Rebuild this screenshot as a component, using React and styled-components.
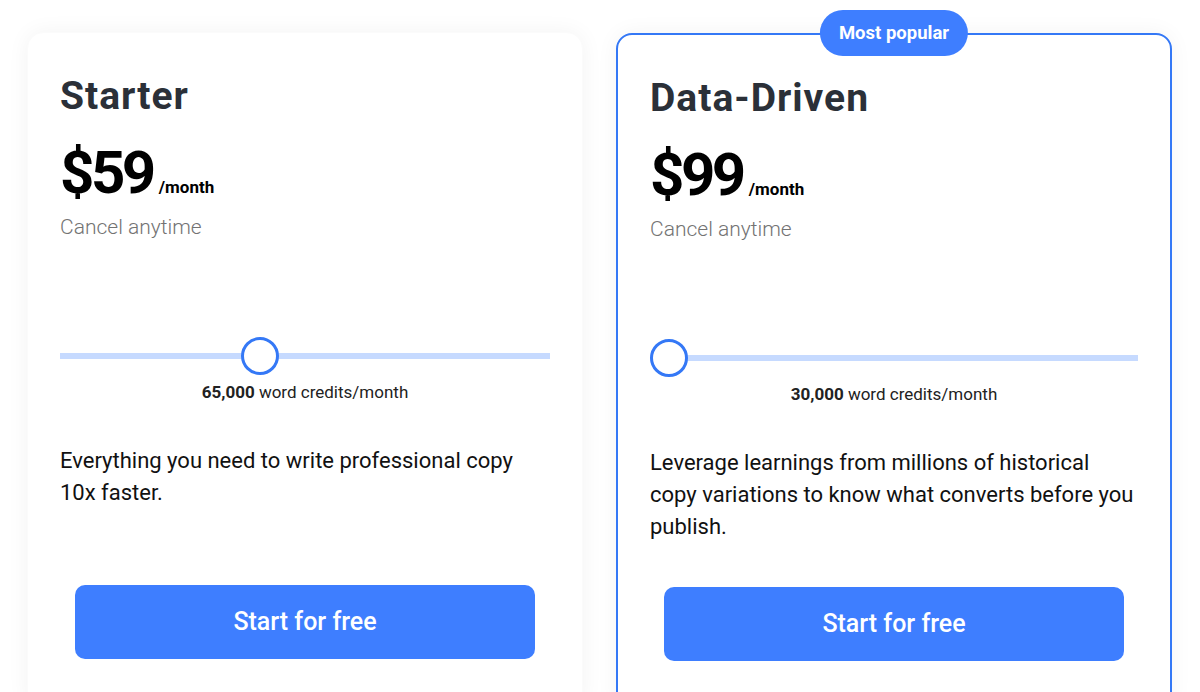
import React from "react";
import styled, { createGlobalStyle } from "styled-components";

const Global = createGlobalStyle`
  html, body { margin: 0; padding: 0; background: #ffffff; overflow: hidden; }
  body { font-family: Roboto, "Liberation Sans", sans-serif; -webkit-font-smoothing: antialiased; }
  * { box-sizing: border-box; }
`;

const Page = styled.div`
  display: grid;
  grid-template-columns: 1fr 1fr;
  column-gap: 33px;
  padding: 32px 28px 0 27px;
  width: 1200px;
  height: 692px;
  overflow: hidden;
  align-items: start;
`;

const Card = styled.div`
  position: relative;
  display: flex;
  flex-direction: column;
  background: #ffffff;
  border-radius: 16px;
  border: ${(p) => (p.$featured ? "2px solid #3478f6" : "1px solid #fbfbfb")};
  margin-top: ${(p) => (p.$featured ? "1px" : "0")};
  padding: 40px 32px 48px;
  box-shadow: 0 0 22px rgba(0, 0, 0, 0.05);
`;

const Badge = styled.div`
  position: absolute;
  top: -25px;
  left: 50%;
  transform: translateX(-50%);
  height: 46px;
  padding: 0 19px;
  border-radius: 23px;
  background: #3e7eff;
  color: #ffffff;
  font-size: 18.5px;
  font-weight: 700;
  display: flex;
  align-items: center;
  white-space: nowrap;
`;

const Title = styled.h2`
  margin: 0;
  font-size: 39px;
  line-height: 1.2;
  font-weight: 700;
  letter-spacing: 1px;
  color: #2b3038;
`;

const PriceRow = styled.div`
  display: flex;
  align-items: baseline;
  margin-top: 23px;
`;

const Amount = styled.span`
  font-size: 60px;
  line-height: 1;
  font-weight: 700;
  color: #000000;
  letter-spacing: -3.5px;
`;

const Period = styled.span`
  margin-left: 6px;
  font-size: 17px;
  font-weight: 700;
  color: #000000;
`;

const Note = styled.div`
  margin-top: 9px;
  font-size: 21px;
  line-height: 30px;
  font-weight: 300;
  color: #737373;
`;

const Slider = styled.div`
  position: relative;
  display: flex;
  align-items: center;
  height: 38px;
  margin-top: 95px;
`;

const Track = styled.div`
  width: 100%;
  height: 6px;
  background: #c6daff;
`;

const Thumb = styled.div`
  position: absolute;
  top: 0;
  width: 38px;
  height: 38px;
  border-radius: 50%;
  border: 3px solid #3478f6;
  background: #ffffff;
`;

const Credits = styled.div`
  margin-top: 5px;
  text-align: center;
  font-size: 17px;
  line-height: 24px;
  color: #222222;
  b { font-weight: 700; }
`;

const Description = styled.p`
  margin: 41px 0 0;
  font-size: 22px;
  line-height: 32px;
  font-weight: 400;
  color: #111111;
  min-height: 96px;
`;

const Button = styled.button`
  align-self: center;
  margin-top: 44px;
  width: 460px;
  height: 74px;
  border: none;
  border-radius: 10px;
  background: #3e7eff;
  color: #ffffff;
  font-family: Roboto, "Liberation Sans", sans-serif;
  font-size: 25px;
  font-weight: 500;
  cursor: pointer;
`;

const plans = [
  {
    name: "Starter",
    price: "$59",
    credits: "65,000",
    pos: 0.4,
    desc: "Everything you need to write professional copy 10x faster.",
  },
  {
    name: "Data-Driven",
    price: "$99",
    credits: "30,000",
    pos: 0,
    featured: true,
    desc: "Leverage learnings from millions of historical copy variations to know what converts before you publish.",
  },
];

function Plan({ plan }) {
  return (
    <Card $featured={plan.featured}>
      {plan.featured && <Badge>Most popular</Badge>}
      <Title>{plan.name}</Title>
      <PriceRow>
        <Amount>{plan.price}</Amount>
        <Period>/month</Period>
      </PriceRow>
      <Note>Cancel anytime</Note>
      <Slider>
        <Track />
        <Thumb style={{ left: `calc((100% - 38px) * ${plan.pos})` }} />
      </Slider>
      <Credits>
        <b>{plan.credits}</b> word credits/month
      </Credits>
      <Description>{plan.desc}</Description>
      <Button>Start for free</Button>
    </Card>
  );
}

export default function App() {
  return (
    <>
      <Global />
      <Page>
        {plans.map((p) => (
          <Plan key={p.name} plan={p} />
        ))}
      </Page>
    </>
  );
}
